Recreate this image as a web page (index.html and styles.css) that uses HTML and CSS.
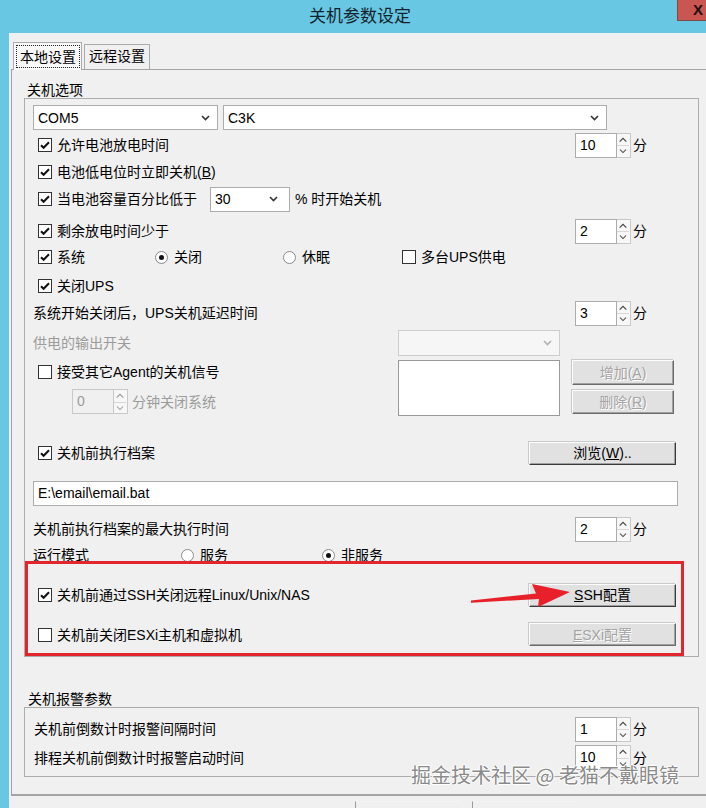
FILE: index.html
```html
<!DOCTYPE html>
<html>
  <head>
    <meta charset="utf-8">
    <title>关机参数设定</title>
    <link rel="stylesheet" href="styles.css">
  </head>
  <body>
    <div class="titlebar">
      <span class="title">关机参数设定</span>
      <span class="close">X</span>
    </div>

    <div class="client">
      <div class="tabs">
        <div class="tab active"><span class="focus">本地设置</span></div>
        <div class="tab">远程设置</div>
      </div>

      <div class="panel">
        <div class="group-label">关机选项</div>
        <div class="group main">
          <div class="row combo-row">
            <div class="combo port">COM5<svg class="chev" viewBox="0 0 9 6"><path d="M1 1l3.5 3.5L8 1"/></svg></div>
            <div class="combo model">C3K<svg class="chev" viewBox="0 0 9 6"><path d="M1 1l3.5 3.5L8 1"/></svg></div>
          </div>

          <div class="row mt-2">
            <label class="check"><span class="cb"><svg viewBox="0 0 12 12"><path d="M2 6.2l2.6 2.6L10 3.2"/></svg></span>允许电池放电时间</label>
            <div class="spin">
              <span class="spin-box">10</span>
              <span class="spin-btns"><svg viewBox="0 0 12 12"><path d="M2.5 8l3.5-3.5L9.5 8"/></svg><svg viewBox="0 0 12 12"><path d="M2.5 4l3.5 3.5L9.5 4"/></svg></span>
              <span class="unit">分</span>
            </div>
          </div>

          <div class="row mt-1">
            <label class="check"><span class="cb"><svg viewBox="0 0 12 12"><path d="M2 6.2l2.6 2.6L10 3.2"/></svg></span><span>电池低电位时立即关机(<u>B</u>)</span></label>
          </div>

          <div class="row mt-1">
            <label class="check"><span class="cb"><svg viewBox="0 0 12 12"><path d="M2 6.2l2.6 2.6L10 3.2"/></svg></span>当电池容量百分比低于</label>
            <div class="combo percent">30<svg class="chev" viewBox="0 0 9 6"><path d="M1 1l3.5 3.5L8 1"/></svg></div>
            <span class="after-combo">% 时开始关机</span>
          </div>

          <div class="row mt-6">
            <label class="check"><span class="cb"><svg viewBox="0 0 12 12"><path d="M2 6.2l2.6 2.6L10 3.2"/></svg></span>剩余放电时间少于</label>
            <div class="spin">
              <span class="spin-box">2</span>
              <span class="spin-btns"><svg viewBox="0 0 12 12"><path d="M2.5 8l3.5-3.5L9.5 8"/></svg><svg viewBox="0 0 12 12"><path d="M2.5 4l3.5 3.5L9.5 4"/></svg></span>
              <span class="unit">分</span>
            </div>
          </div>

          <div class="row">
            <label class="check sys"><span class="cb"><svg viewBox="0 0 12 12"><path d="M2 6.2l2.6 2.6L10 3.2"/></svg></span>系统</label>
            <label class="radio off-w"><span class="rb on"></span>关闭</label>
            <label class="radio sleep-w"><span class="rb"></span>休眠</label>
            <label class="check plain"><span class="cb"></span>多台UPS供电</label>
          </div>

          <div class="row mt-3">
            <label class="check"><span class="cb"><svg viewBox="0 0 12 12"><path d="M2 6.2l2.6 2.6L10 3.2"/></svg></span>关闭UPS</label>
          </div>

          <div class="row mt-1">
            <span>系统开始关闭后，UPS关机延迟时间</span>
            <div class="spin">
              <span class="spin-box">3</span>
              <span class="spin-btns"><svg viewBox="0 0 12 12"><path d="M2.5 8l3.5-3.5L9.5 8"/></svg><svg viewBox="0 0 12 12"><path d="M2.5 4l3.5 3.5L9.5 4"/></svg></span>
              <span class="unit">分</span>
            </div>
          </div>

          <div class="grid-row mt-4">
            <span class="disabled">供电的输出开关</span>
            <div class="combo outlet"><svg class="chev" viewBox="0 0 9 6"><path d="M1 1l3.5 3.5L8 1"/></svg></div>
          </div>

          <div class="grid-row agent mt-4">
            <div>
              <div class="row agent-row">
                <label class="check"><span class="cb"></span>接受其它Agent的关机信号</label>
              </div>
              <div class="row agent-spin">
                <div class="spin dim">
                  <span class="spin-box">0</span>
                  <span class="spin-btns"><svg viewBox="0 0 12 12"><path d="M2.5 8l3.5-3.5L9.5 8"/></svg><svg viewBox="0 0 12 12"><path d="M2.5 4l3.5 3.5L9.5 4"/></svg></span>
                  <span class="unit">分钟关闭系统</span>
                </div>
              </div>
            </div>
            <div class="listbox"></div>
            <div class="side-btns">
              <button class="btn small off">增加(<u>A</u>)</button>
              <button class="btn small off">删除(<u>R</u>)</button>
            </div>
          </div>

          <div class="row exec-row">
            <label class="check"><span class="cb"><svg viewBox="0 0 12 12"><path d="M2 6.2l2.6 2.6L10 3.2"/></svg></span>关机前执行档案</label>
            <button class="btn">浏览(<u>W</u>)..</button>
          </div>

          <div class="field">E:\email\email.bat</div>

          <div class="row mt-10">
            <span>关机前执行档案的最大执行时间</span>
            <div class="spin">
              <span class="spin-box">2</span>
              <span class="spin-btns"><svg viewBox="0 0 12 12"><path d="M2.5 8l3.5-3.5L9.5 8"/></svg><svg viewBox="0 0 12 12"><path d="M2.5 4l3.5 3.5L9.5 4"/></svg></span>
              <span class="unit">分</span>
            </div>
          </div>

          <div class="row mode-row">
            <span class="mode-label">运行模式</span>
            <label class="radio service-w"><span class="rb"></span>服务</label>
            <label class="radio"><span class="rb on"></span>非服务</label>
          </div>

          <div class="row ssh-row">
            <label class="check"><span class="cb"><svg viewBox="0 0 12 12"><path d="M2 6.2l2.6 2.6L10 3.2"/></svg></span>关机前通过SSH关闭远程Linux/Unix/NAS</label>
            <button class="btn"><u>S</u>SH配置</button>
          </div>

          <div class="row esxi-row">
            <label class="check"><span class="cb"></span>关机前关闭ESXi主机和虚拟机</label>
            <button class="btn off"><u>E</u>SXi配置</button>
          </div>
        </div>

        <div class="group-label alarm-label">关机报警参数</div>
        <div class="group alarm">
          <div class="row alarm-row">
            <span>关机前倒数计时报警间隔时间</span>
            <div class="spin">
              <span class="spin-box">1</span>
              <span class="spin-btns"><svg viewBox="0 0 12 12"><path d="M2.5 8l3.5-3.5L9.5 8"/></svg><svg viewBox="0 0 12 12"><path d="M2.5 4l3.5 3.5L9.5 4"/></svg></span>
              <span class="unit">分</span>
            </div>
          </div>
          <div class="row alarm-row mt-4">
            <span>排程关机前倒数计时报警启动时间</span>
            <div class="spin">
              <span class="spin-box">10</span>
              <span class="spin-btns"><svg viewBox="0 0 12 12"><path d="M2.5 8l3.5-3.5L9.5 8"/></svg><svg viewBox="0 0 12 12"><path d="M2.5 4l3.5 3.5L9.5 4"/></svg></span>
              <span class="unit">分</span>
            </div>
          </div>
        </div>
      </div>

      <!-- dialog buttons sit just under the panel, only their edges peek out -->
      <div class="footer">
        <span class="edge"></span>
        <span class="edge"></span>
      </div>
    </div>

    <!-- red callout around the SSH / ESXi options -->
    <div class="callout"></div>
    <svg class="arrow" viewBox="0 0 120 34">
      <path d="M11 22.5L76 15.5L72 6L110 14L78 29L79 21L11 24.8Z"/>
    </svg>

    <div class="watermark">掘金技术社区 @ 老猫不戴眼镜</div>
  </body>
</html>
```

FILE: styles.css
```css
* {
  box-sizing: border-box;
}
html,
body {
  margin: 0;
  padding: 0;
}
body {
  width: 706px;
  height: 808px;
  overflow: hidden;
  position: relative;
  background: #68c7e3;
  font-family: "Liberation Sans", "Noto Sans CJK SC", sans-serif;
  font-size: 14px;
  line-height: 16px;
  color: #000;
}
u {
  text-decoration: underline;
}

/* window frame */
.titlebar {
  height: 33px;
  display: flex;
  align-items: center;
  justify-content: center;
  padding-left: 14px;
}
.title {
  font-size: 17px;
  line-height: 20px;
  color: #14222b;
}
.close {
  position: absolute;
  top: 0;
  right: 0;
  width: 29px;
  height: 21px;
  padding-left: 15px;
  background: #c95651;
  border-left: 1px solid #7d4a4a;
  border-bottom: 1px solid #7d4a4a;
  font: bold 15px/20px "Liberation Sans", sans-serif;
  color: #1c1010;
}
.client {
  margin-left: 9px;
  height: 775px;
  padding-top: 9px;
  background: #f0f0f0;
}

/* tabs */
.tabs {
  display: flex;
  align-items: flex-end;
  height: 27px;
  padding-left: 4px;
  position: relative;
  z-index: 1;
}
.tab {
  height: 25px;
  margin-left: 2px;
  padding: 0 4px;
  border: 1px solid #acacac;
  border-bottom: none;
  background: #f0f0f0;
  line-height: 23px;
}
.tab.active {
  height: 28px;
  margin-left: 0;
  margin-bottom: -1px;
  padding: 2px 1px 2px 2px;
  background: #f8f8f8;
}
.focus {
  display: block;
  height: 100%;
  padding: 0 3px;
  border: 1px dotted #222;
  line-height: 22px;
}
.panel {
  margin-left: 2px;
  width: 700px;
  height: 727px;
  padding-left: 12px;
  border: 1px solid #a3a3a3;
  border-right: none;
  border-bottom-width: 2px;
}

/* group boxes */
.group-label {
  margin-top: 12px;
  padding-left: 3px;
  height: 16px;
}
.group {
  width: 675px;
  border: 1px solid #adadad;
}
.group.main {
  padding: 6px 22px 10px 8px;
}
.alarm-label {
  margin-top: 34px;
  padding-left: 4px;
}
.group.alarm {
  padding: 9px 22px 6px 9px;
}

/* rows */
.row {
  display: flex;
  align-items: center;
  height: 26px;
}
.grid-row {
  display: grid;
  grid-template-columns: 365px 162px 1fr;
  align-items: center;
  height: 26px;
}
.mt-1 { margin-top: 1px; }
.mt-2 { margin-top: 2px; }
.mt-3 { margin-top: 3px; }
.mt-4 { margin-top: 4px; }
.mt-6 { margin-top: 6px; }
.mt-10 { margin-top: 10px; }

.combo-row {
  height: 25px;
  gap: 5px;
}
.disabled {
  color: #9b9b9b;
}

/* check boxes and radios */
.check {
  display: flex;
  align-items: center;
  padding-left: 5px;
}
.check.sys {
  width: 122px;
}
.check.plain {
  padding-left: 0;
}
.cb {
  width: 14px;
  height: 14px;
  margin-right: 5px;
  border: 1px solid #333;
  background: #fff;
  display: flex;
  align-items: center;
  justify-content: center;
}
.cb svg {
  width: 12px;
  height: 12px;
  fill: none;
  stroke: #111;
  stroke-width: 2;
}
.radio {
  display: flex;
  align-items: center;
  gap: 6px;
}
.radio.off-w {
  width: 128px;
}
.radio.sleep-w {
  width: 119px;
}
.radio.service-w {
  width: 141px;
}
.rb {
  width: 13px;
  height: 13px;
  border: 1px solid #8a8a8a;
  border-radius: 50%;
  background: #fff;
  position: relative;
}
.rb.on::after {
  content: "";
  position: absolute;
  left: 3px;
  top: 3px;
  width: 5px;
  height: 5px;
  border-radius: 50%;
  background: #111;
}

/* combo boxes */
.combo {
  height: 25px;
  display: flex;
  align-items: center;
  justify-content: space-between;
  padding: 0 7px 0 4px;
  border: 1px solid #acacac;
  background: #fff;
}
.combo.port {
  width: 185px;
}
.combo.model {
  width: 384px;
}
.combo.percent {
  width: 80px;
  margin-left: 13px;
  padding-right: 11px;
}
.combo.outlet {
  height: 26px;
  justify-content: flex-end;
  background: #f6f6f6;
  border-color: #cdcdcd;
}
.chev {
  width: 9px;
  height: 6px;
  fill: none;
  stroke: #333;
  stroke-width: 1.6;
}
.outlet .chev {
  stroke: #b0b0b0;
}
.after-combo {
  margin-left: 5px;
}

/* spinners */
.spin {
  display: flex;
  align-items: center;
  margin-left: auto;
  margin-right: 29px;
}
.spin-box {
  width: 42px;
  height: 25px;
  padding-left: 4px;
  border: 1px solid #acacac;
  background: #fff;
  line-height: 23px;
}
.spin-btns {
  width: 14px;
  height: 25px;
  display: flex;
  flex-direction: column;
  border: 1px solid #c8c8c8;
  border-left: none;
  background: #f7f7f7;
}
.spin-btns svg {
  width: 12px;
  height: 11.5px;
  fill: none;
  stroke: #444;
  stroke-width: 1.2;
}
.spin-btns svg + svg {
  border-top: 1px solid #d6d6d6;
}
.unit {
  margin-left: 2px;
}
.spin.dim {
  margin-left: 39px;
  margin-right: 0;
  color: #9b9b9b;
}
.spin.dim .spin-box {
  background: #f0f0f0;
  border-color: #c8c8c8;
}
.spin.dim .spin-btns svg {
  stroke: #9b9b9b;
}
.spin.dim .unit {
  margin-left: 4px;
}

/* agent block */
.grid-row.agent {
  height: 56px;
  align-items: start;
}
.agent-row {
  height: 24px;
}
.agent-spin {
  height: 25px;
  margin-top: 5px;
}
.listbox {
  height: 56px;
  border: 1px solid #9a9a9a;
  background: #fff;
}
.side-btns {
  display: flex;
  flex-direction: column;
  align-items: flex-end;
  gap: 5px;
  padding-right: 2px;
}

/* buttons */
.btn {
  width: 147px;
  height: 23px;
  margin-left: auto;
  padding: 0;
  display: flex;
  align-items: center;
  justify-content: center;
  font: inherit;
  color: #000;
  background: #e1e1e1;
  border: 1px solid;
  border-color: #fdfdfd #3a3a3a #3a3a3a #fdfdfd;
  box-shadow: inset -1px -1px #a0a0a0, -1px -1px #c9c9c9;
}
.btn.small {
  width: 102px;
  height: 24px;
}
.btn.small:first-child {
  height: 25px;
}
.btn.off {
  color: #a3a3a3;
  text-shadow: 1px 1px #fff;
  border-color: #fdfdfd #6a6a6a #6a6a6a #fdfdfd;
}

.exec-row {
  height: 24px;
  margin-top: 25px;
}
.field {
  height: 25px;
  margin-top: 16px;
  margin-right: -2px;
  padding-left: 4px;
  border: 1px solid #acacac;
  background: #fff;
  line-height: 23px;
}
.mode-row {
  height: 20px;
  margin-top: 3px;
}
.mode-label {
  width: 148px;
}
.ssh-row {
  height: 22px;
  margin-top: 19px;
}
.esxi-row {
  height: 23px;
  margin-top: 17px;
}
.alarm-row {
  height: 24px;
}
.alarm-row + .alarm-row {
  height: 25px;
}

/* bottom dialog buttons */
.footer {
  display: flex;
  gap: 12px;
  margin-top: 5px;
  padding-left: 346px;
}
.edge {
  width: 105px;
  height: 20px;
  border-left: 1px solid #9a9a9a;
  border-top: 1px solid #f4f4f4;
}

/* annotation overlay */
.callout {
  position: absolute;
  left: 25px;
  top: 561px;
  width: 659px;
  height: 95px;
  border: 3px solid #e1262d;
}
.arrow {
  position: absolute;
  left: 460px;
  top: 578px;
  width: 120px;
  height: 34px;
  fill: #e8202a;
}
.watermark {
  position: absolute;
  left: 411px;
  top: 763px;
  font-family: "Noto Sans CJK SC", sans-serif;
  font-size: 20px;
  line-height: 24px;
  color: #8a8a8a;
  text-shadow: 1px 0 #fff, -1px 0 #fff, 0 1px #fff, 0 -1px #fff;
}
```
